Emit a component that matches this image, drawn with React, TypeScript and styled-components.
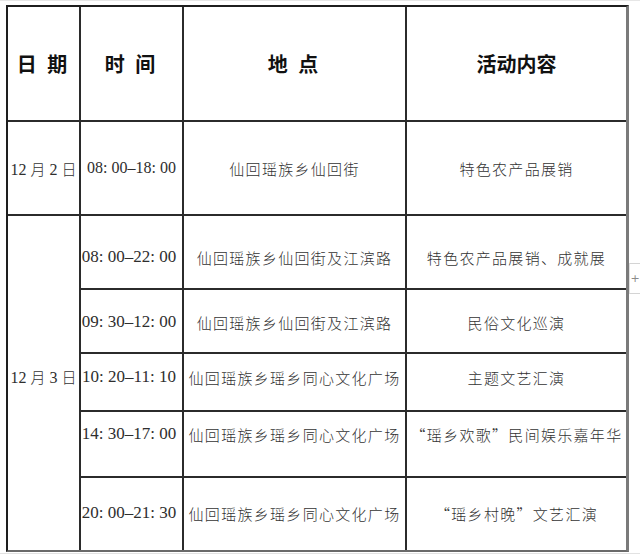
import React from "react";
import styled, { createGlobalStyle } from "styled-components";

const Global = createGlobalStyle`
  html, body { margin: 0; padding: 0; background: #fff; }
  body { width: 640px; height: 554px; overflow: hidden; }
`;

const Page = styled.div`
  position: relative;
  box-sizing: border-box;
  width: 640px;
  height: 554px;
  padding: 4px 0 0 0;
  border-top: 1px solid #e6e6e6;
  border-bottom: 1px solid #e2e2e2;
`;

const Sheet = styled.div`
  margin-left: 6px;
  width: 623px;
  box-sizing: border-box;
  display: grid;
  grid-template-columns: 71px 101px 221px 219px;
  grid-template-rows: 113px 92px 72px 62px 56px 64px 72px;
  gap: 2px;
  background: #2b2b2b;
  border-top: 2px solid #1e1e1e;
  border-left: 2px solid #1e1e1e;
  border-right: 3px solid #7a7a7a;
  border-bottom: 2px solid #6a6a6a;
`;

const Cell = styled.div<{
  $head?: boolean;
  $spaced?: boolean;
  $offset?: number;
  $size?: number;
  $padRight?: number;
}>`
  background: #fff;
  box-sizing: border-box;
  display: flex;
  align-items: center;
  justify-content: center;
  white-space: nowrap;
  overflow: visible;
  padding-top: ${(p) => Math.max(0, 2 * (p.$offset ?? 0))}px;
  padding-bottom: ${(p) => Math.max(0, -2 * (p.$offset ?? 0))}px;
  padding-right: ${(p) => p.$padRight ?? 0}px;
  font-family: ${(p) =>
    p.$head
      ? `"Noto Sans CJK SC", "Noto Sans", sans-serif`
      : `"Liberation Serif", "Noto Sans CJK SC", serif`};
  font-weight: ${(p) => (p.$head ? 700 : 400)};
  font-size: ${(p) => (p.$head ? 20 : p.$size ?? 16)}px;
  color: ${(p) => (p.$head ? "#111" : "#2e2e2e")};
  letter-spacing: ${(p) => (p.$head ? "3px" : p.$spaced ? "1.3px" : "0")};
`;

const HeadWide = styled(Cell)`
  letter-spacing: 0;
`;

const DateCell = styled(Cell)`
  grid-column: 1;
  grid-row: 3 / span 5;
`;

const TimeCell = styled(Cell)`
  grid-column: 2;
`;

const Cjk = styled.span`
  font-family: "Noto Sans CJK SC", sans-serif;
  font-size: 15px;
  font-weight: 300;
  color: #333;
`;

const AddRow = styled.div`
  position: absolute;
  left: 629px;
  top: 262px;
  width: 11px;
  height: 31px;
  box-sizing: border-box;
  border-top: 1px solid #d4d4d4;
  border-bottom: 1px solid #d4d4d4;
  border-left: 1px solid #e0e0e0;
  display: flex;
  align-items: center;
  justify-content: center;
  color: #8a8a8a;
  font-family: "DejaVu Sans", sans-serif;
  font-size: 11px;
  line-height: 1;
`;

type Row = { time: string; place: string; act: string; offset: number };

const rows3: Row[] = [
  { time: "08: 00–22: 00", place: "仙回瑶族乡仙回街及江滨路", act: "特色农产品展销、成就展", offset: 5 },
  { time: "09: 30–12: 00", place: "仙回瑶族乡仙回街及江滨路", act: "民俗文化巡演", offset: 1 },
  { time: "10: 20–11: 10", place: "仙回瑶族乡瑶乡同心文化广场", act: "主题文艺汇演", offset: -5 },
  { time: "14: 30–17: 00", place: "仙回瑶族乡瑶乡同心文化广场", act: "“瑶乡欢歌”民间娱乐嘉年华", offset: -10 },
  { time: "20: 00–21: 30", place: "仙回瑶族乡瑶乡同心文化广场", act: "“瑶乡村晚”文艺汇演", offset: -1 },
];

const DateText: React.FC<{ day: string }> = ({ day }) => (
  <span>
    12 <Cjk>月</Cjk> {day} <Cjk>日</Cjk>
  </span>
);

export default function App() {
  return (
    <>
      <Global />
      <Page>
        <Sheet>
          <Cell $head>日 期</Cell>
          <Cell $head>时 间</Cell>
          <Cell $head>地 点</Cell>
          <HeadWide $head>活动内容</HeadWide>

          <Cell>
            <DateText day="2" />
          </Cell>
          <Cell>08: 00–18: 00</Cell>
          <Cell $spaced>
            <Cjk>仙回瑶族乡仙回街</Cjk>
          </Cell>
          <Cell $spaced>
            <Cjk>特色农产品展销</Cjk>
          </Cell>

          <DateCell $offset={-7}>
            <DateText day="3" />
          </DateCell>
          {rows3.map((r) => (
            <React.Fragment key={r.time}>
              <TimeCell $size={17} $padRight={5} $offset={r.offset}>
                {r.time}
              </TimeCell>
              <Cell $spaced $offset={r.offset}>
                <Cjk>{r.place}</Cjk>
              </Cell>
              <Cell $spaced $offset={r.offset}>
                <Cjk>{r.act}</Cjk>
              </Cell>
            </React.Fragment>
          ))}
        </Sheet>
        <AddRow>+</AddRow>
      </Page>
    </>
  );
}
